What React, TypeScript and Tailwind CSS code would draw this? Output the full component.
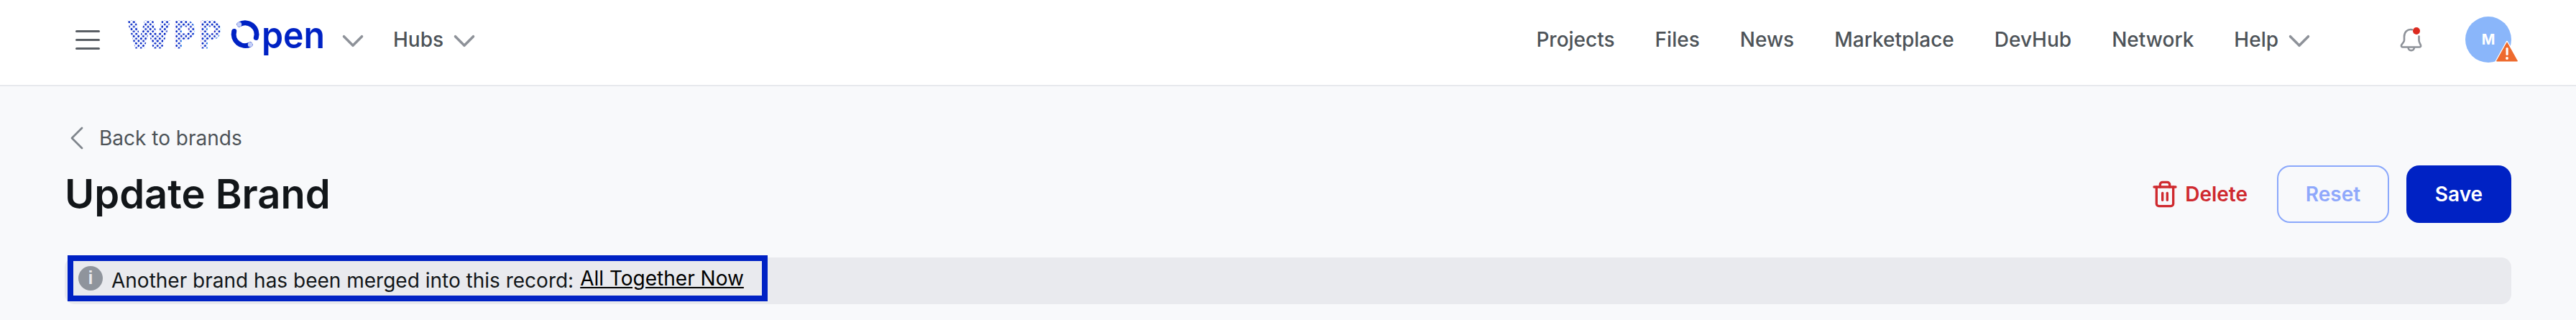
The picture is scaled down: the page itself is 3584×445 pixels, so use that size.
import { ChevronDown, ChevronLeft, Trash2 } from 'lucide-react'

const inter = { fontFamily: 'Inter, sans-serif' }

function Logo() {
  return (
    <svg width="273" height="48" viewBox="0 0 273 48" className="shrink-0 overflow-visible">
      <defs>
        <pattern id="dots" width="6.6" height="6.6" patternUnits="userSpaceOnUse">
          <circle cx="1.65" cy="1.65" r="1.35" fill="#0022c4" />
          <circle cx="4.95" cy="4.95" r="1.35" fill="#0022c4" />
        </pattern>
      </defs>
      <g
        fontFamily="'Liberation Sans', sans-serif"
        fontWeight="700"
        fontSize="52"
        fill="url(#dots)"
        stroke="url(#dots)"
        strokeWidth="3"
      >
        <text x="1" y="37" textLength="56" lengthAdjust="spacingAndGlyphs">W</text>
        <text x="64" y="37" textLength="29" lengthAdjust="spacingAndGlyphs">P</text>
        <text x="100" y="37" textLength="29" lengthAdjust="spacingAndGlyphs">P</text>
      </g>
      <path d="M155 5 A16 16 0 0 1 178.3 23.5" fill="none" stroke="#0022c4" strokeWidth="7" strokeLinecap="round" />
      <path d="M147.7 14.5 A16 16 0 0 0 170 33" fill="none" stroke="#0022c4" strokeWidth="7" strokeLinecap="round" />
      <circle cx="155" cy="5" r="3.2" fill="#c5d0f7" />
      <circle cx="170" cy="33" r="3.2" fill="#c5d0f7" />
      <text
        x="186"
        y="38"
        textLength="88"
        lengthAdjust="spacingAndGlyphs"
        fontFamily="Inter, sans-serif"
        fontWeight="600"
        fontSize="51"
        fill="#0022c4"
      >
        pen
      </text>
    </svg>
  )
}

function Bell() {
  return (
    <svg width="32" height="34" viewBox="0 0 32 34" fill="none" className="shrink-0">
      <path
        d="M17 3.2 C10 2 6 7 6 13 V18 C6 21 3 22 2 25 C1.6 26.4 2.4 27.5 4 27.5 H27 C28.6 27.5 29.6 26.4 29 25 C28 22 26.5 21 26.5 18 V12.5"
        stroke="#8e9299"
        strokeWidth="2.6"
        strokeLinecap="round"
      />
      <path d="M11.5 28 C12 33.5 19.5 33.5 20 28" stroke="#8e9299" strokeWidth="2.6" />
      <circle cx="23" cy="5" r="5" fill="#dc2a1f" />
    </svg>
  )
}

function Avatar() {
  return (
    <div className="relative flex h-16 w-16 shrink-0 items-center justify-center rounded-full bg-[#8ab6fa]">
      <span className="text-[20px] font-bold text-white">M</span>
      <svg width="36" height="34" viewBox="0 0 36 34" className="absolute -right-[12px] -bottom-[2px]">
        <path d="M18 3 L33 30 H3 Z" fill="#ee6a2e" stroke="#fff" strokeWidth="2.5" strokeLinejoin="round" />
        <path d="M18 4 L32.5 30 H3.5 Z" fill="#ee6a2e" stroke="#ee6a2e" strokeWidth="1" strokeLinejoin="round" />
        <rect x="16.5" y="11" width="3.2" height="11" rx="1.6" fill="#fff" />
        <circle cx="18" cy="26" r="1.9" fill="#fff" />
      </svg>
    </div>
  )
}

export default function App() {
  const links = ['Projects', 'Files', 'News', 'Marketplace', 'DevHub', 'Network']

  return (
    <div className="h-[445px] overflow-hidden bg-[#f8f9fb]" style={inter}>
      <header className="flex h-[120px] items-center justify-between border-b-2 border-[#e7e9ed] bg-white pr-[90px] pb-[8px] pl-[105px]">
        <div className="flex items-center">
          <div className="flex w-[34px] flex-col gap-[9px]">
            <span className="h-[3px] rounded-full bg-[#5a5f65]" />
            <span className="h-[3px] rounded-full bg-[#5a5f65]" />
            <span className="h-[3px] rounded-full bg-[#5a5f65]" />
          </div>
          <div className="ml-[39px] -translate-y-[2px]">
            <Logo />
          </div>
          <ChevronDown size={50} strokeWidth={1.7} className="ml-[15px] translate-y-[2px] text-[#8e9299]" />
          <span className="ml-[31px] text-[28px] font-medium text-[#4d5358]">Hubs</span>
          <ChevronDown size={50} strokeWidth={1.7} className="ml-[4px] translate-y-[2px] text-[#8e9299]" />
        </div>
        <div className="flex items-center">
          <nav className="flex items-center gap-[56px] text-[28px] font-medium text-[#4d5358]">
            {links.map(l => (
              <span key={l}>{l}</span>
            ))}
            <span className="flex items-center gap-[4px]">
              Help
              <ChevronDown size={50} strokeWidth={1.7} className="translate-y-[2px] text-[#8e9299]" />
            </span>
          </nav>
          <div className="ml-[115px]">
            <Bell />
          </div>
          <div className="ml-[59px]">
            <Avatar />
          </div>
        </div>
      </header>

      <main className="px-[90px] pt-[58px]">
        <div className="flex h-[28px] items-center text-[28px] text-[#4d5358]">
          <ChevronLeft size={56} strokeWidth={1.2} className="-ml-[11px] text-[#7f858c]" />
          <span className="ml-[3px]">Back to brands</span>
        </div>

        <div className="mt-[24px] flex h-[80px] items-center justify-between">
          <h1 className="text-[56px] font-semibold text-[#121619]">Update Brand</h1>
          <div className="flex items-center">
            <button className="flex items-center gap-[8px] text-[28px] font-semibold text-[#cf2a2f]">
              <Trash2 size={40} strokeWidth={2} />
              Delete
            </button>
            <button className="ml-[41px] flex h-[80px] w-[156px] items-center justify-center rounded-[18px] border-2 border-[#8ba8fb] text-[28px] font-semibold text-[#8fa8fb]">
              Reset
            </button>
            <button className="ml-[24px] flex h-[80px] w-[146px] items-center justify-center rounded-[18px] bg-[#0022c4] text-[28px] font-semibold text-white">
              Save
            </button>
          </div>
        </div>

        <div className="mt-[48px] h-[65px] rounded-[14px] bg-[#e9eaee]">
          <div className="relative -top-[3px] ml-[4px] inline-flex h-[64px] items-center border-[8px] border-[#0022c4] pr-[25px] pl-[7px]">
            <span className="flex h-[34px] w-[34px] items-center justify-center rounded-full bg-[#8f949c] font-['Liberation_Sans'] text-[25px] font-bold text-[#e9eaee]">
              i
            </span>
            <span className="relative top-[3px] ml-[12px] text-[28px] text-[#121619]">Another brand has been merged into this record:</span>
            <a className="ml-[9px] text-[28px] leading-[32px] text-black underline">All Together Now</a>
          </div>
        </div>
      </main>
    </div>
  )
}
